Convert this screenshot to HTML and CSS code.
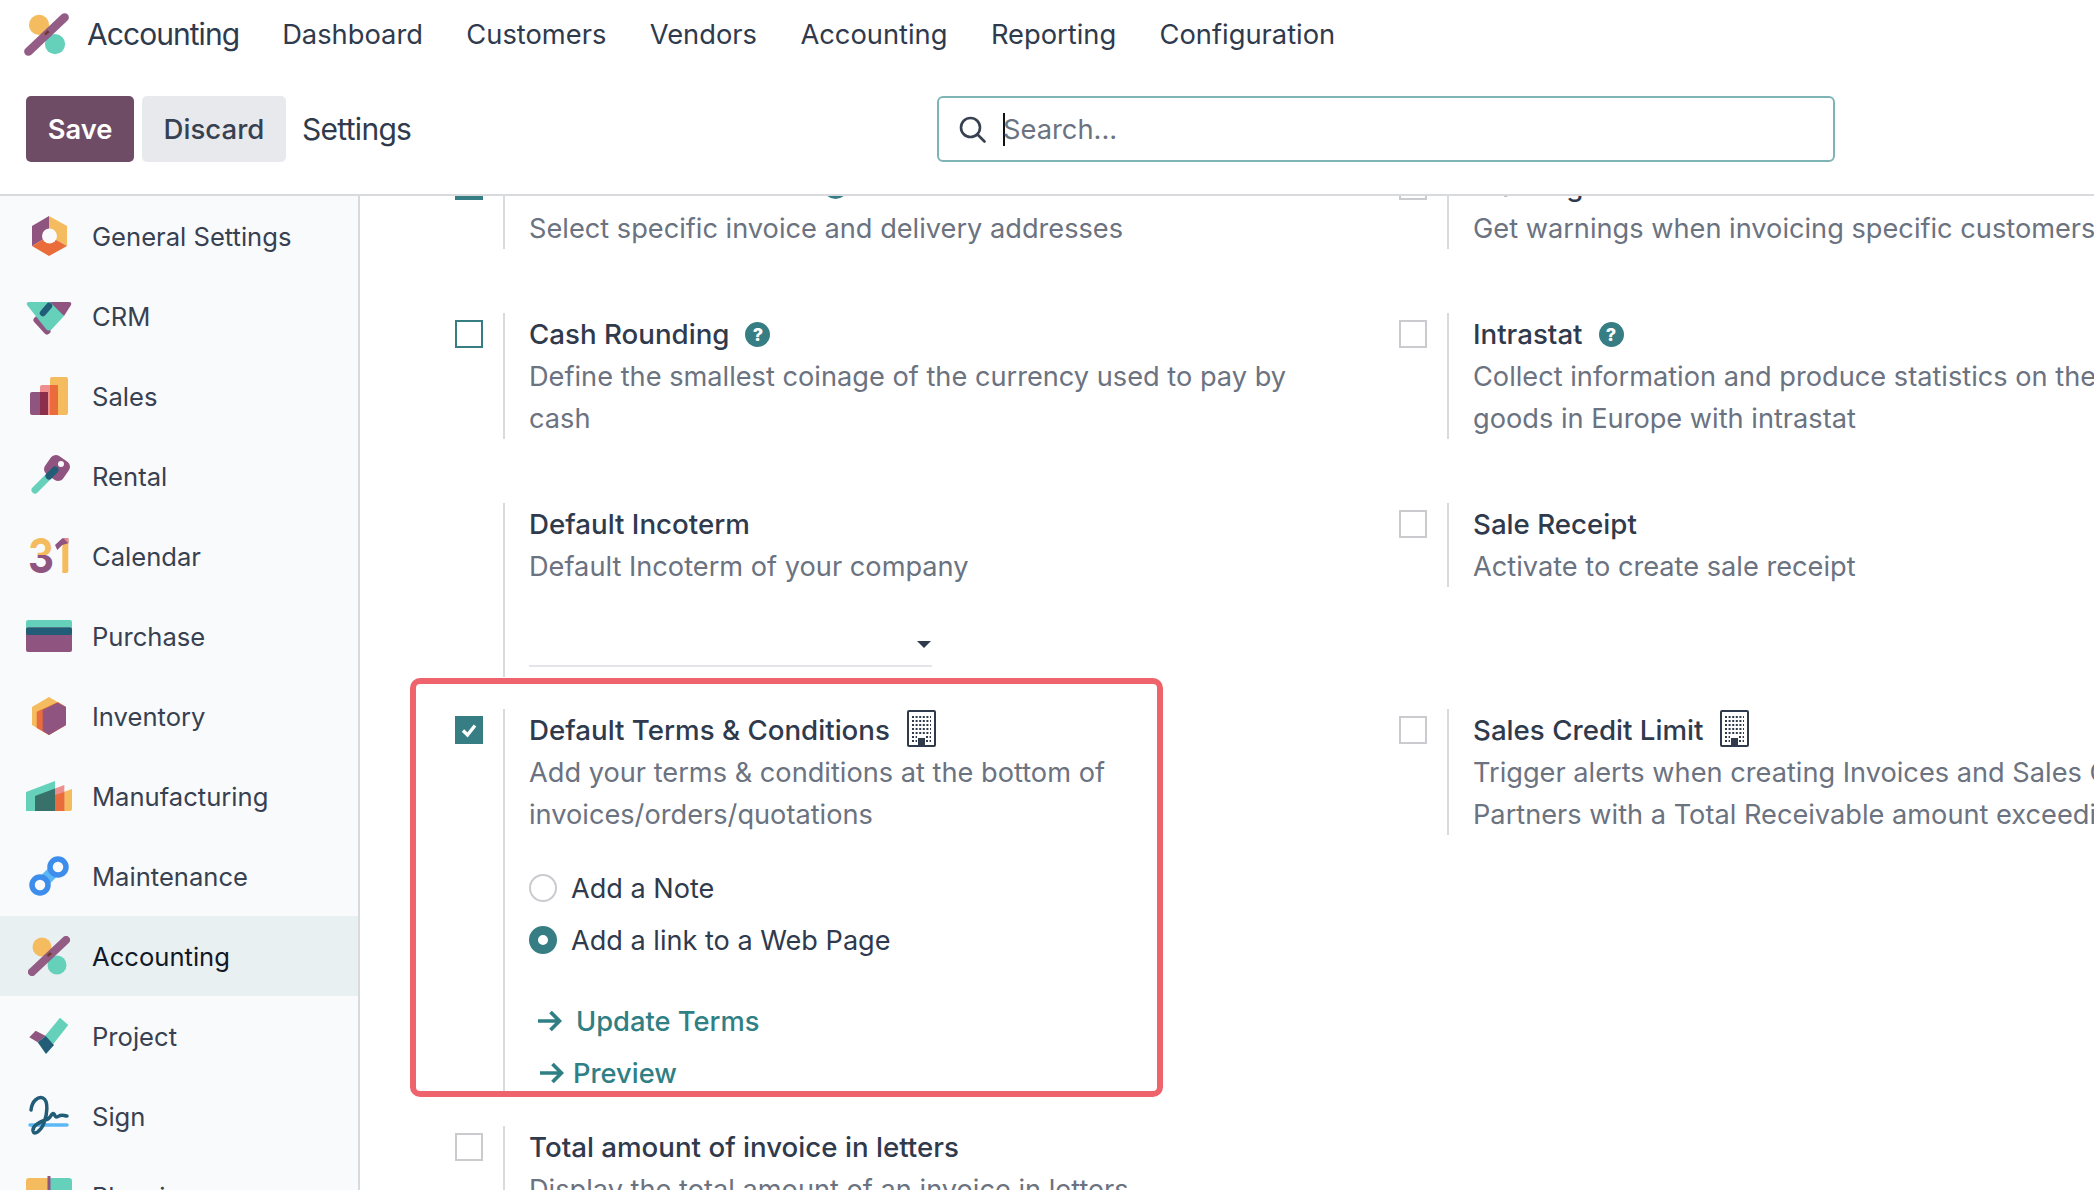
FILE: index.html
```html
<!DOCTYPE html>
<html lang="en">
<head>
    <meta charset="UTF-8">
    <meta name="viewport" content="width=device-width, initial-scale=1.0">
    <title>Settings</title>
    <link rel="stylesheet" href="styles.css">
</head>
<body>
    <svg class="sprites" xmlns="http://www.w3.org/2000/svg">
        <symbol id="icon-accounting" viewBox="0 0 46 46">
            <circle cx="16" cy="14" r="9.5" fill="#f4bc5e"/>
            <circle cx="31" cy="32" r="9.5" fill="#65d1bb"/>
            <path d="M40 7 6 39" stroke="#8f5580" stroke-width="8" stroke-linecap="round" opacity=".95"/>
            <path d="M21 22 24 19 26 21 22 24Z" fill="#6d3a2c"/>
        </symbol>
        <symbol id="icon-building" viewBox="0 0 29 37">
            <rect x="1" y="1" width="27" height="35" rx="1" fill="none" stroke="#2f3a4d" stroke-width="2"/>
            <path d="M5 7H24M5 11H24M5 15H24M5 19H24M5 23H24M5 27H10M19 27H24M5 31H10M19 31H24" stroke="#2f3a4d" stroke-width="2" stroke-dasharray="2 1.6"/>
            <rect x="11" y="28" width="7" height="8" fill="#2f3a4d"/>
        </symbol>
        <linearGradient id="cal-three" x1="0" y1="5" x2="0" y2="40" gradientUnits="userSpaceOnUse">
            <stop offset=".5" stop-color="#f4bc5e"/>
            <stop offset=".5" stop-color="#8f5580"/>
        </linearGradient>
    </svg>

    <header class="header">
        <nav class="topbar">
            <svg class="logo"><use href="#icon-accounting"/></svg>
            <span class="brand">Accounting</span>
            <a class="nav-link">Dashboard</a>
            <a class="nav-link">Customers</a>
            <a class="nav-link">Vendors</a>
            <a class="nav-link">Accounting</a>
            <a class="nav-link">Reporting</a>
            <a class="nav-link">Configuration</a>
        </nav>
        <div class="controls">
            <div class="controls-left">
                <button class="btn btn-save" type="button">Save</button>
                <button class="btn btn-discard" type="button">Discard</button>
                <span class="page-title">Settings</span>
            </div>
            <div class="search">
                <svg class="search-icon" viewBox="0 0 27 27" fill="none" stroke="#374151" stroke-width="2.6" stroke-linecap="round">
                    <circle cx="11.5" cy="11.5" r="9.5"/>
                    <path d="M18.5 18.5 25.5 25.5"/>
                </svg>
                <span class="search-caret"></span>
                <span class="search-text">Search...</span>
            </div>
        </div>
    </header>

    <div class="layout">
        <aside class="sidebar">
            <div class="side-item">
                <svg class="side-icon" viewBox="0 0 46 46">
                    <path d="M23 3 6 13V33L23 23Z" fill="#8f5580"/>
                    <path d="M23 3 41 13V33L23 23Z" fill="#f4bc5e"/>
                    <path d="M6 33 23 23 41 33 23 43Z" fill="#e96c3a"/>
                    <circle cx="23.5" cy="23" r="7.5" fill="#f9fafb"/>
                </svg>
                General Settings
            </div>
            <div class="side-item">
                <svg class="side-icon" viewBox="0 0 46 46">
                    <path d="M11 27 21 38" stroke="#8f5580" stroke-width="7" stroke-linecap="round"/>
                    <path d="M22 9H43Q46 9 45 12L38 23 30 18Z" fill="#8f5580"/>
                    <path d="M3 9H24L38 23 26 36Q23 39 20 36L1 12Q0 9 3 9Z" fill="#65d1bb"/>
                    <path d="M17 20 23 13" stroke="#225d78" stroke-width="6.5" stroke-linecap="round"/>
                </svg>
                CRM
            </div>
            <div class="side-item">
                <svg class="side-icon" viewBox="0 0 46 46">
                    <rect x="24" y="4" width="18" height="38" rx="2" fill="#f4bc5e"/>
                    <rect x="14" y="12" width="18" height="30" rx="2" fill="#ee8e8e"/>
                    <rect x="24" y="12" width="8" height="30" fill="#e96c3a"/>
                    <rect x="4" y="19" width="18" height="23" rx="2" fill="#8f5580"/>
                    <rect x="14" y="19" width="8" height="23" fill="#8b2f4a"/>
                </svg>
                Sales
            </div>
            <div class="side-item">
                <svg class="side-icon" viewBox="0 0 46 46">
                    <path d="M9 37 26 20" stroke="#65d1bb" stroke-width="7" stroke-linecap="round"/>
                    <rect x="20" y="4" width="22" height="22" rx="6" fill="#8f5580" transform="rotate(35 31 15)"/>
                    <path d="M23 23 29 17" stroke="#225d78" stroke-width="7" stroke-linecap="round"/>
                    <circle cx="35" cy="11" r="3" fill="#f9fafb"/>
                </svg>
                Rental
            </div>
            <div class="side-item">
                <svg class="side-icon side-icon-open" viewBox="0 0 46 46">
                    <text class="cal-digit" x="2" y="40" fill="url(#cal-three)" textLength="26" lengthAdjust="spacingAndGlyphs">3</text>
                    <path d="M36.3 6H42.3V38Q42.3 40 40.3 40H36.3Z" fill="#f4bc5e"/>
                    <path d="M29 12 36.3 5.3H42.3V10.3L36.3 12 31.3 17Z" fill="#8f5580"/>
                    <path d="M37.5 5.3H42.3V10.3Z" fill="#ee8e8e"/>
                </svg>
                Calendar
            </div>
            <div class="side-item">
                <svg class="side-icon" viewBox="0 0 46 46">
                    <rect x="0" y="7" width="46" height="16" rx="2" fill="#65d1bb"/>
                    <rect x="0" y="14.5" width="46" height="24.5" rx="2" fill="#8f5580"/>
                    <rect x="0" y="14.5" width="46" height="7.5" rx="2" fill="#225d78"/>
                </svg>
                Purchase
            </div>
            <div class="side-item">
                <svg class="side-icon" viewBox="0 0 46 46">
                    <path d="M23 4 40 14V32L23 42 6 32V14Z" fill="#f4bc5e"/>
                    <path d="M10.7 18.7 32 9 40 14V32L23 42 10.7 35Z" fill="#e96c3a"/>
                    <path d="M16.7 17 31.3 9.7 40 14V32L23 42 16.7 38Z" fill="#8f5580"/>
                </svg>
                Inventory
            </div>
            <div class="side-item">
                <svg class="side-icon" viewBox="0 0 46 46">
                    <path d="M29 22 46 16V36Q46 38 44 38H29Z" fill="#f4bc5e"/>
                    <path d="M29 15.5 38.3 12V38H29Z" fill="#ee8e8e"/>
                    <path d="M29 22 38.3 19V38H29Z" fill="#e96c3a"/>
                    <path d="M0 19 29 8V38H0Z" fill="#65d1bb"/>
                    <path d="M9 23 29 15.5V38H9Z" fill="#38716a"/>
                </svg>
                Manufacturing
            </div>
            <div class="side-item">
                <svg class="side-icon" viewBox="0 0 46 46">
                    <path d="M14 32 32 14" stroke="#5cb8f5" stroke-width="12"/>
                    <circle cx="14" cy="32" r="8" fill="#f9fafb" stroke="#3d8ded" stroke-width="5.5"/>
                    <circle cx="32" cy="14" r="8" fill="#f9fafb" stroke="#3d8ded" stroke-width="5.5"/>
                </svg>
                Maintenance
            </div>
            <div class="side-item side-item-active">
                <svg class="side-icon"><use href="#icon-accounting"/></svg>
                Accounting
            </div>
            <div class="side-item">
                <svg class="side-icon" viewBox="0 0 46 46">
                    <path d="M34 4.7 42.3 12 27.3 31 18.3 23.7Z" fill="#65d1bb"/>
                    <path d="M3.3 24.3 9.7 17.7 19.7 23 11.7 29.3Z" fill="#8f5580"/>
                    <path d="M11.7 29.3 19.7 23 28 32 20 41Z" fill="#225d78"/>
                </svg>
                Project
            </div>
            <div class="side-item">
                <svg class="side-icon" viewBox="0 0 46 46" fill="none">
                    <path d="M4 32H41" stroke="#5cb8f5" stroke-width="3.5" stroke-linecap="round"/>
                    <path d="M5 17C6 8 12 3 17 5 23 8 21 22 18 30 15 38 8 43 7 38 6 32 16 28 22 26 25 24 26 19 28 21 30 24 29 25 33 23 36 21 38 23 41 23" stroke="#225d78" stroke-width="3.5" stroke-linecap="round"/>
                </svg>
                Sign
            </div>
            <div class="side-item">
                <svg class="side-icon" viewBox="0 0 46 46">
                    <rect x="0" y="5" width="24" height="36" rx="3" fill="#f4bc5e"/>
                    <rect x="22" y="5" width="24" height="36" rx="3" fill="#65d1bb"/>
                    <rect x="21.5" y="3" width="3" height="38" fill="#8f5580"/>
                </svg>
                Planning
            </div>
        </aside>

        <main class="content">
            <div class="settings-grid">
                <div class="setting">
                    <span class="check check-on"><svg viewBox="0 0 28 28"><path d="M8 14.5 12.5 19 20 9.5" fill="none" stroke="#fff" stroke-width="3.4"/></svg></span>
                    <div class="setting-body">
                        <div class="setting-title">Customer Addresses <span class="help">?</span></div>
                        <div class="setting-desc">Select specific invoice and delivery addresses</div>
                    </div>
                </div>
                <div class="setting">
                    <span class="check"></span>
                    <div class="setting-body">
                        <div class="setting-title">Warnings</div>
                        <div class="setting-desc">Get warnings when invoicing specific customers</div>
                    </div>
                </div>

                <div class="setting">
                    <span class="check check-hover"></span>
                    <div class="setting-body">
                        <div class="setting-title">Cash Rounding <span class="help">?</span></div>
                        <div class="setting-desc">Define the smallest coinage of the currency used to pay by cash</div>
                    </div>
                </div>
                <div class="setting">
                    <span class="check"></span>
                    <div class="setting-body">
                        <div class="setting-title">Intrastat <span class="help">?</span></div>
                        <div class="setting-desc">Collect information and produce statistics on the trade in goods in Europe with intrastat</div>
                    </div>
                </div>

                <div class="setting setting-short">
                    <span class="check check-none"></span>
                    <div class="setting-body">
                        <div class="setting-title">Default Incoterm</div>
                        <div class="setting-desc">Default Incoterm of your company</div>
                        <div class="select"><span class="select-caret"></span></div>
                    </div>
                </div>
                <div class="setting setting-short">
                    <span class="check"></span>
                    <div class="setting-body">
                        <div class="setting-title">Sale Receipt</div>
                        <div class="setting-desc">Activate to create sale receipt</div>
                    </div>
                </div>

                <div class="setting setting-short">
                    <div class="highlight"></div>
                    <span class="check check-on"><svg viewBox="0 0 28 28"><path d="M8 14.5 12.5 19 20 9.5" fill="none" stroke="#fff" stroke-width="3.4"/></svg></span>
                    <div class="setting-body">
                        <div class="setting-title">Default Terms &amp; Conditions <svg class="building"><use href="#icon-building"/></svg></div>
                        <div class="setting-desc">Add your terms &amp; conditions at the bottom of invoices/orders/quotations</div>
                        <div class="radios">
                            <label class="radio"><span class="radio-dot"></span>Add a Note</label>
                            <label class="radio"><span class="radio-dot radio-dot-on"></span>Add a link to a Web Page</label>
                        </div>
                        <div class="links">
                            <a class="link"><svg class="link-arrow" viewBox="0 0 25 22" fill="none" stroke="#2f7f84" stroke-width="3.7"><path d="M1 11H22M13.5 2 22.5 11 13.5 20"/></svg>Update Terms</a>
                            <a class="link link-second"><svg class="link-arrow" viewBox="0 0 25 22" fill="none" stroke="#2f7f84" stroke-width="3.7"><path d="M1 11H22M13.5 2 22.5 11 13.5 20"/></svg>Preview</a>
                        </div>
                    </div>
                </div>
                <div class="setting setting-short">
                    <span class="check"></span>
                    <div class="setting-body">
                        <div class="setting-title">Sales Credit Limit <svg class="building"><use href="#icon-building"/></svg></div>
                        <div class="setting-desc">Trigger alerts when creating Invoices and Sales Orders for Partners with a Total Receivable amount exceeding a limit</div>
                    </div>
                </div>

                <div class="setting">
                    <span class="check"></span>
                    <div class="setting-body">
                        <div class="setting-title">Total amount of invoice in letters</div>
                        <div class="setting-desc">Display the total amount of an invoice in letters</div>
                    </div>
                </div>
            </div>
        </main>
    </div>
</body>
</html>
```

FILE: styles.css
```css
* {
    box-sizing: border-box;
}
html, body {
    height: 100%;
}
body {
    margin: 0;
    overflow: hidden;
    font-family: Inter, "Liberation Sans", sans-serif;
    font-size: 27.3px;
    color: #374151;
    background: #fff;
}
.sprites {
    display: block;
    width: 0;
    height: 0;
}

/* header */
.header {
    height: 196px;
    border-bottom: 2px solid #d8dadd;
    background: #fff;
}
.topbar {
    display: flex;
    align-items: center;
    height: 68px;
    padding-left: 22px;
}
.logo {
    width: 49px;
    height: 49px;
}
.brand {
    margin-left: 16px;
    margin-right: 43px;
    font-size: 30px;
    letter-spacing: -.95px;
    color: #2f3a4d;
}
.nav-link {
    margin-right: 43.4px;
    color: #2f3a4d;
}
.controls {
    display: flex;
    margin-top: 28px;
    padding-left: 26px;
}
.controls-left {
    display: flex;
    align-items: center;
    width: 911px;
}
.btn {
    height: 66px;
    border: 0;
    border-radius: 5px;
    font-family: inherit;
    font-size: 27.3px;
}
.btn-save {
    width: 108px;
    font-weight: 600;
    color: #fff;
    background: #6f4c66;
}
.btn-discard {
    width: 144px;
    margin-left: 8px;
    font-size: 27.6px;
    font-weight: 500;
    color: #374151;
    background: #e7e9ed;
}
.page-title {
    margin-left: 16px;
    font-size: 30px;
    letter-spacing: -.7px;
    color: #2f3a4d;
}
.search {
    display: flex;
    align-items: center;
    width: 898px;
    height: 66px;
    padding-left: 20px;
    border: 2px solid #7fb4b6;
    border-radius: 6px;
}
.search-icon {
    width: 27px;
    height: 27px;
}
.search-caret {
    width: 2px;
    height: 33px;
    margin-left: 17px;
    background: #111;
}
.search-text {
    margin-left: -2px;
    color: #6b7280;
}

/* body */
.layout {
    display: flex;
    height: 994px;
}
.sidebar {
    flex: none;
    width: 360px;
    overflow: hidden;
    border-right: 2px solid #d8dadd;
    background: #f9fafb;
}
.side-item {
    display: flex;
    align-items: center;
    height: 80px;
    padding-left: 26px;
    font-size: 25.6px;
}
.side-item-active {
    color: #111827;
    background: #e8f0f1;
}
.side-icon {
    flex: none;
    width: 46px;
    height: 46px;
    margin-right: 20px;
}
.side-icon-open {
    overflow: visible;
}
.cal-digit {
    font-family: Inter, sans-serif;
    font-size: 48px;
    font-weight: 700;
}
.content {
    flex: 1;
    overflow: hidden;
    padding-left: 95px;
}
.settings-grid {
    display: grid;
    grid-template-columns: 944px 944px;
    align-items: start;
    margin-top: -31px;
}
.setting {
    position: relative;
    display: flex;
    margin-bottom: 64px;
}
.setting-short {
    margin-bottom: 32px;
}
.check {
    flex: none;
    width: 28px;
    height: 28px;
    margin-top: 7px;
    margin-right: 20px;
    border: 2px solid #c9cbcf;
}
.check svg {
    display: block;
    width: 28px;
    height: 28px;
    margin: -2px;
}
.check-on {
    border-color: #377e84;
    background: #377e84;
}
.check-hover {
    border-color: #377e84;
}
.check-none {
    border: 0;
}
.setting-body {
    width: 817px;
    padding-left: 24px;
    border-left: 2px solid #d8dadd;
}
.setting-title {
    display: flex;
    align-items: center;
    height: 42px;
    font-size: 27.7px;
    font-weight: 500;
    color: #2f3a4d;
}
.setting-desc {
    margin-top: 1px;
    margin-bottom: -1px;
    font-size: 27.2px;
    line-height: 42px;
    color: #6b7280;
}
.help {
    display: flex;
    align-items: center;
    justify-content: center;
    width: 25px;
    height: 25px;
    margin-left: 16px;
    border-radius: 50%;
    font-size: 18px;
    font-weight: 800;
    color: #fff;
    background: #377e84;
}
.building {
    width: 29px;
    height: 37px;
    margin-top: -3px;
    margin-left: 17px;
}
.select {
    display: flex;
    align-items: center;
    justify-content: flex-end;
    width: 403px;
    height: 36px;
    margin-top: 44px;
    margin-bottom: 10px;
    padding-right: 1px;
    border-bottom: 2px solid #e4e5e9;
}
.select-caret {
    margin-top: -8px;
    border-top: 7px solid #2f3a4d;
    border-left: 7.5px solid transparent;
    border-right: 7.5px solid transparent;
}
.radios {
    display: flex;
    flex-direction: column;
    gap: 10px;
    margin-top: 32px;
}
.radio {
    display: flex;
    align-items: center;
    height: 42px;
    font-size: 27.1px;
    color: #2f3a4d;
}
.radio-dot {
    flex: none;
    width: 28px;
    height: 28px;
    margin-right: 14px;
    border: 2px solid #c9cbcf;
    border-radius: 50%;
}
.radio-dot-on {
    border: 9px solid #377e84;
}
.links {
    display: flex;
    flex-direction: column;
    gap: 10px;
    margin-top: 39px;
}
.link {
    display: flex;
    align-items: center;
    height: 42px;
    font-weight: 500;
    color: #2f7f84;
}
.link-arrow {
    flex: none;
    width: 25px;
    height: 22px;
    margin-left: 8px;
    margin-right: 14px;
}
.link-second .link-arrow {
    margin-left: 10px;
    margin-right: 9px;
}
.highlight {
    position: absolute;
    top: -31px;
    left: -45px;
    width: 753px;
    height: 419px;
    border: 6px solid #ef646c;
    border-radius: 10px;
    pointer-events: none;
}
```
